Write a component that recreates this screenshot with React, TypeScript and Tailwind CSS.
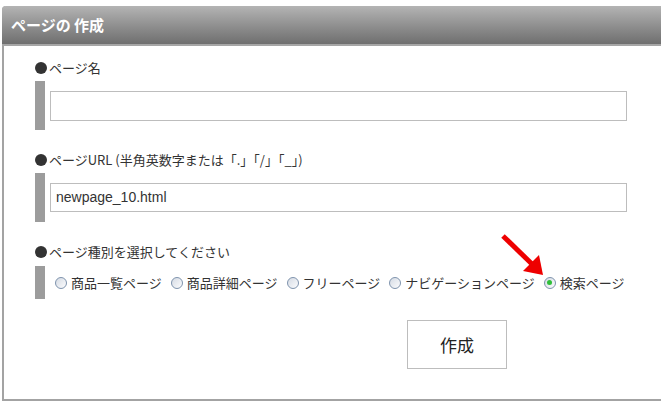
import React from "react";

const jp = { fontFamily: '"MS PGothic", "Noto Sans CJK JP", sans-serif' };

function Label({ text }: { text: string }) {
  return (
    <div className="flex h-[16px] items-center pl-[31px] text-[13px] leading-[16px] text-[#333]">
      <span className="mr-[2px] inline-block h-[12px] w-[12px] shrink-0 rounded-full bg-[#333]" />
      <span>{text}</span>
    </div>
  );
}

function Radio({ label, checked }: { label: string; checked?: boolean }) {
  return (
    <label className="flex items-center whitespace-nowrap text-[13px] text-[#333]">
      <span className="mr-[4px] flex h-[12px] w-[12px] shrink-0 items-center justify-center rounded-full border border-[#7e93ad] bg-gradient-to-br from-[#d5dbe4] to-[#fcfcfd]">
        {checked && <span className="h-[5px] w-[5px] rounded-full bg-[#2fbf3a]" />}
      </span>
      {label}
    </label>
  );
}

export default function App() {
  return (
    <div className="relative h-[416px] w-[661px] overflow-hidden bg-white pl-[2px] pt-[6px]" style={jp}>
      <div className="h-[395px] w-[700px] rounded-tl-[4px] border-b-2 border-l-2 border-[#a3a3a3]">
        {/* Header */}
        <div className="-ml-[2px] flex h-[40px] items-center rounded-tl-[4px] border-b-2 border-[#a6a6a6] bg-gradient-to-b from-[#b4b4b4] to-[#6f6f6f] pl-[9px] text-[15px] font-bold text-white">
          ページの 作成
        </div>

        {/* ページ名 */}
        <div className="mt-[14px]">
          <Label text="ページ名" />
        </div>
        <div className="mt-[5px] flex h-[49px] items-center pl-[31px]">
          <div className="h-full w-[10px] bg-[#9c9c9c]" />
          <div className="ml-[5px] h-[30px] w-[577px] border border-[#bdbdbd]" />
        </div>

        {/* ページURL */}
        <div className="mt-[22px]">
          <Label text="ページURL (半角英数字または「.」「/」「_」)" />
        </div>
        <div className="mt-[5px] flex h-[49px] items-center pl-[31px]">
          <div className="h-full w-[10px] bg-[#9c9c9c]" />
          <div className="ml-[5px] flex h-[29px] w-[577px] items-center border border-[#bdbdbd] pl-[5px] font-['Liberation_Sans'] text-[14px] text-[#333]">
            newpage_10.html
          </div>
        </div>

        {/* ページ種別 */}
        <div className="mt-[22px]">
          <Label text="ページ種別を選択してください" />
        </div>
        <div className="mt-[6px] flex h-[33px] items-center pl-[31px]">
          <div className="h-full w-[10px] bg-[#9c9c9c]" />
          <div className="ml-[10px] flex items-center gap-[9px]">
            <Radio label="商品一覧ページ" />
            <Radio label="商品詳細ページ" />
            <Radio label="フリーページ" />
            <Radio label="ナビゲーションページ" />
            <Radio label="検索ページ" checked />
          </div>
        </div>

        {/* 作成 button */}
        <div className="mt-[21px] pl-[403px]">
          <button className="flex h-[49px] w-[100px] items-center justify-center border border-[#bdbdbd] bg-white text-[17px] text-[#222]">
            作成
          </button>
        </div>
      </div>

      {/* red arrow */}
      <svg className="absolute left-0 top-0" width="661" height="416" viewBox="0 0 661 416">
        <line x1="503" y1="236" x2="533" y2="265" stroke="#ee0000" strokeWidth="5" strokeLinecap="butt" />
        <polygon points="543,275 523,271 539,255" fill="#ee0000" />
      </svg>
    </div>
  );
}
